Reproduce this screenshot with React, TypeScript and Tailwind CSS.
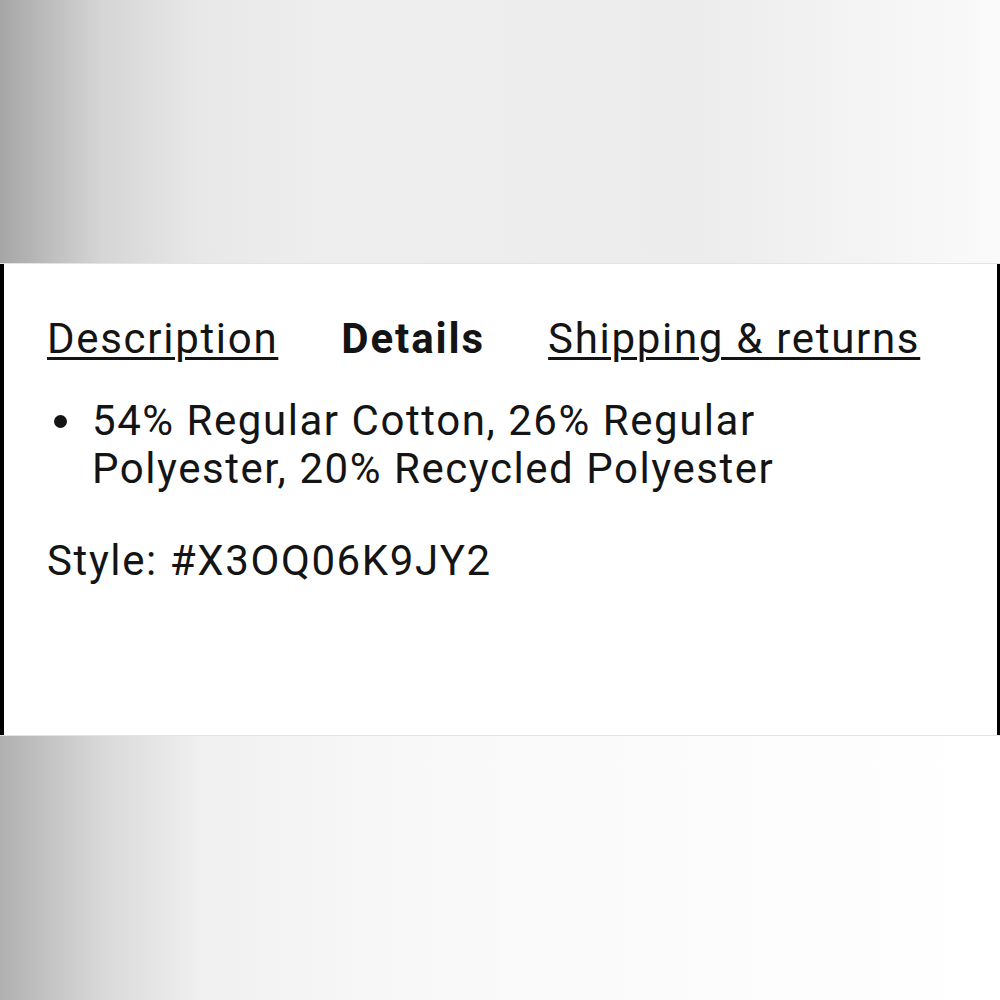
export default function App() {
  return (
    <div className="w-[1000px] h-[1000px] flex flex-col bg-white" style={{ fontFamily: "Roboto, 'Liberation Sans', sans-serif" }}>
      <div className="h-[263px] bg-[linear-gradient(to_right,#a6a6a6_0%,#d5d5d5_10%,#e8e8e8_20%,#eeeeee_33%,#ececec_70%,#fafafa_100%)]" />
      <div className="h-[1px] bg-[#e4e4e4]" />
      <div className="h-[471px] bg-white border-l-4 border-r-[3px] border-black pl-[43px] pt-[51px] text-[#141414]">
        <div className="flex gap-[63px] text-[42px] leading-[48px] tracking-[1.7px]">
          <span className="underline decoration-[3px] underline-offset-[4px]">Description</span>
          <span className="font-bold tracking-[1.9px]">Details</span>
          <span className="underline decoration-[3px] underline-offset-[4px]">Shipping &amp; returns</span>
        </div>
        <ul className="mt-[34px] text-[42px] leading-[48px] tracking-[1.55px]">
          <li className="flex">
            <span className="h-[48px] w-[45px] shrink-0 flex items-center pl-[7px]">
              <span className="w-[13px] h-[13px] rounded-full bg-[#141414]" />
            </span>
            <span className="w-[730px]">54% Regular Cotton, 26% Regular Polyester, 20% Recycled Polyester</span>
          </li>
        </ul>
        <p className="mt-[44px] text-[42px] leading-[48px] tracking-[1.6px]">Style: #X3OQ06K9JY2</p>
      </div>
      <div className="h-[1px] bg-[#e4e4e4]" />
      <div className="flex-1 bg-[linear-gradient(to_right,#b0b0b0_0%,#d8d8d8_10%,#f0f0f0_20%,#f8f8f8_40%,#ffffff_100%)]" />
    </div>
  );
}
